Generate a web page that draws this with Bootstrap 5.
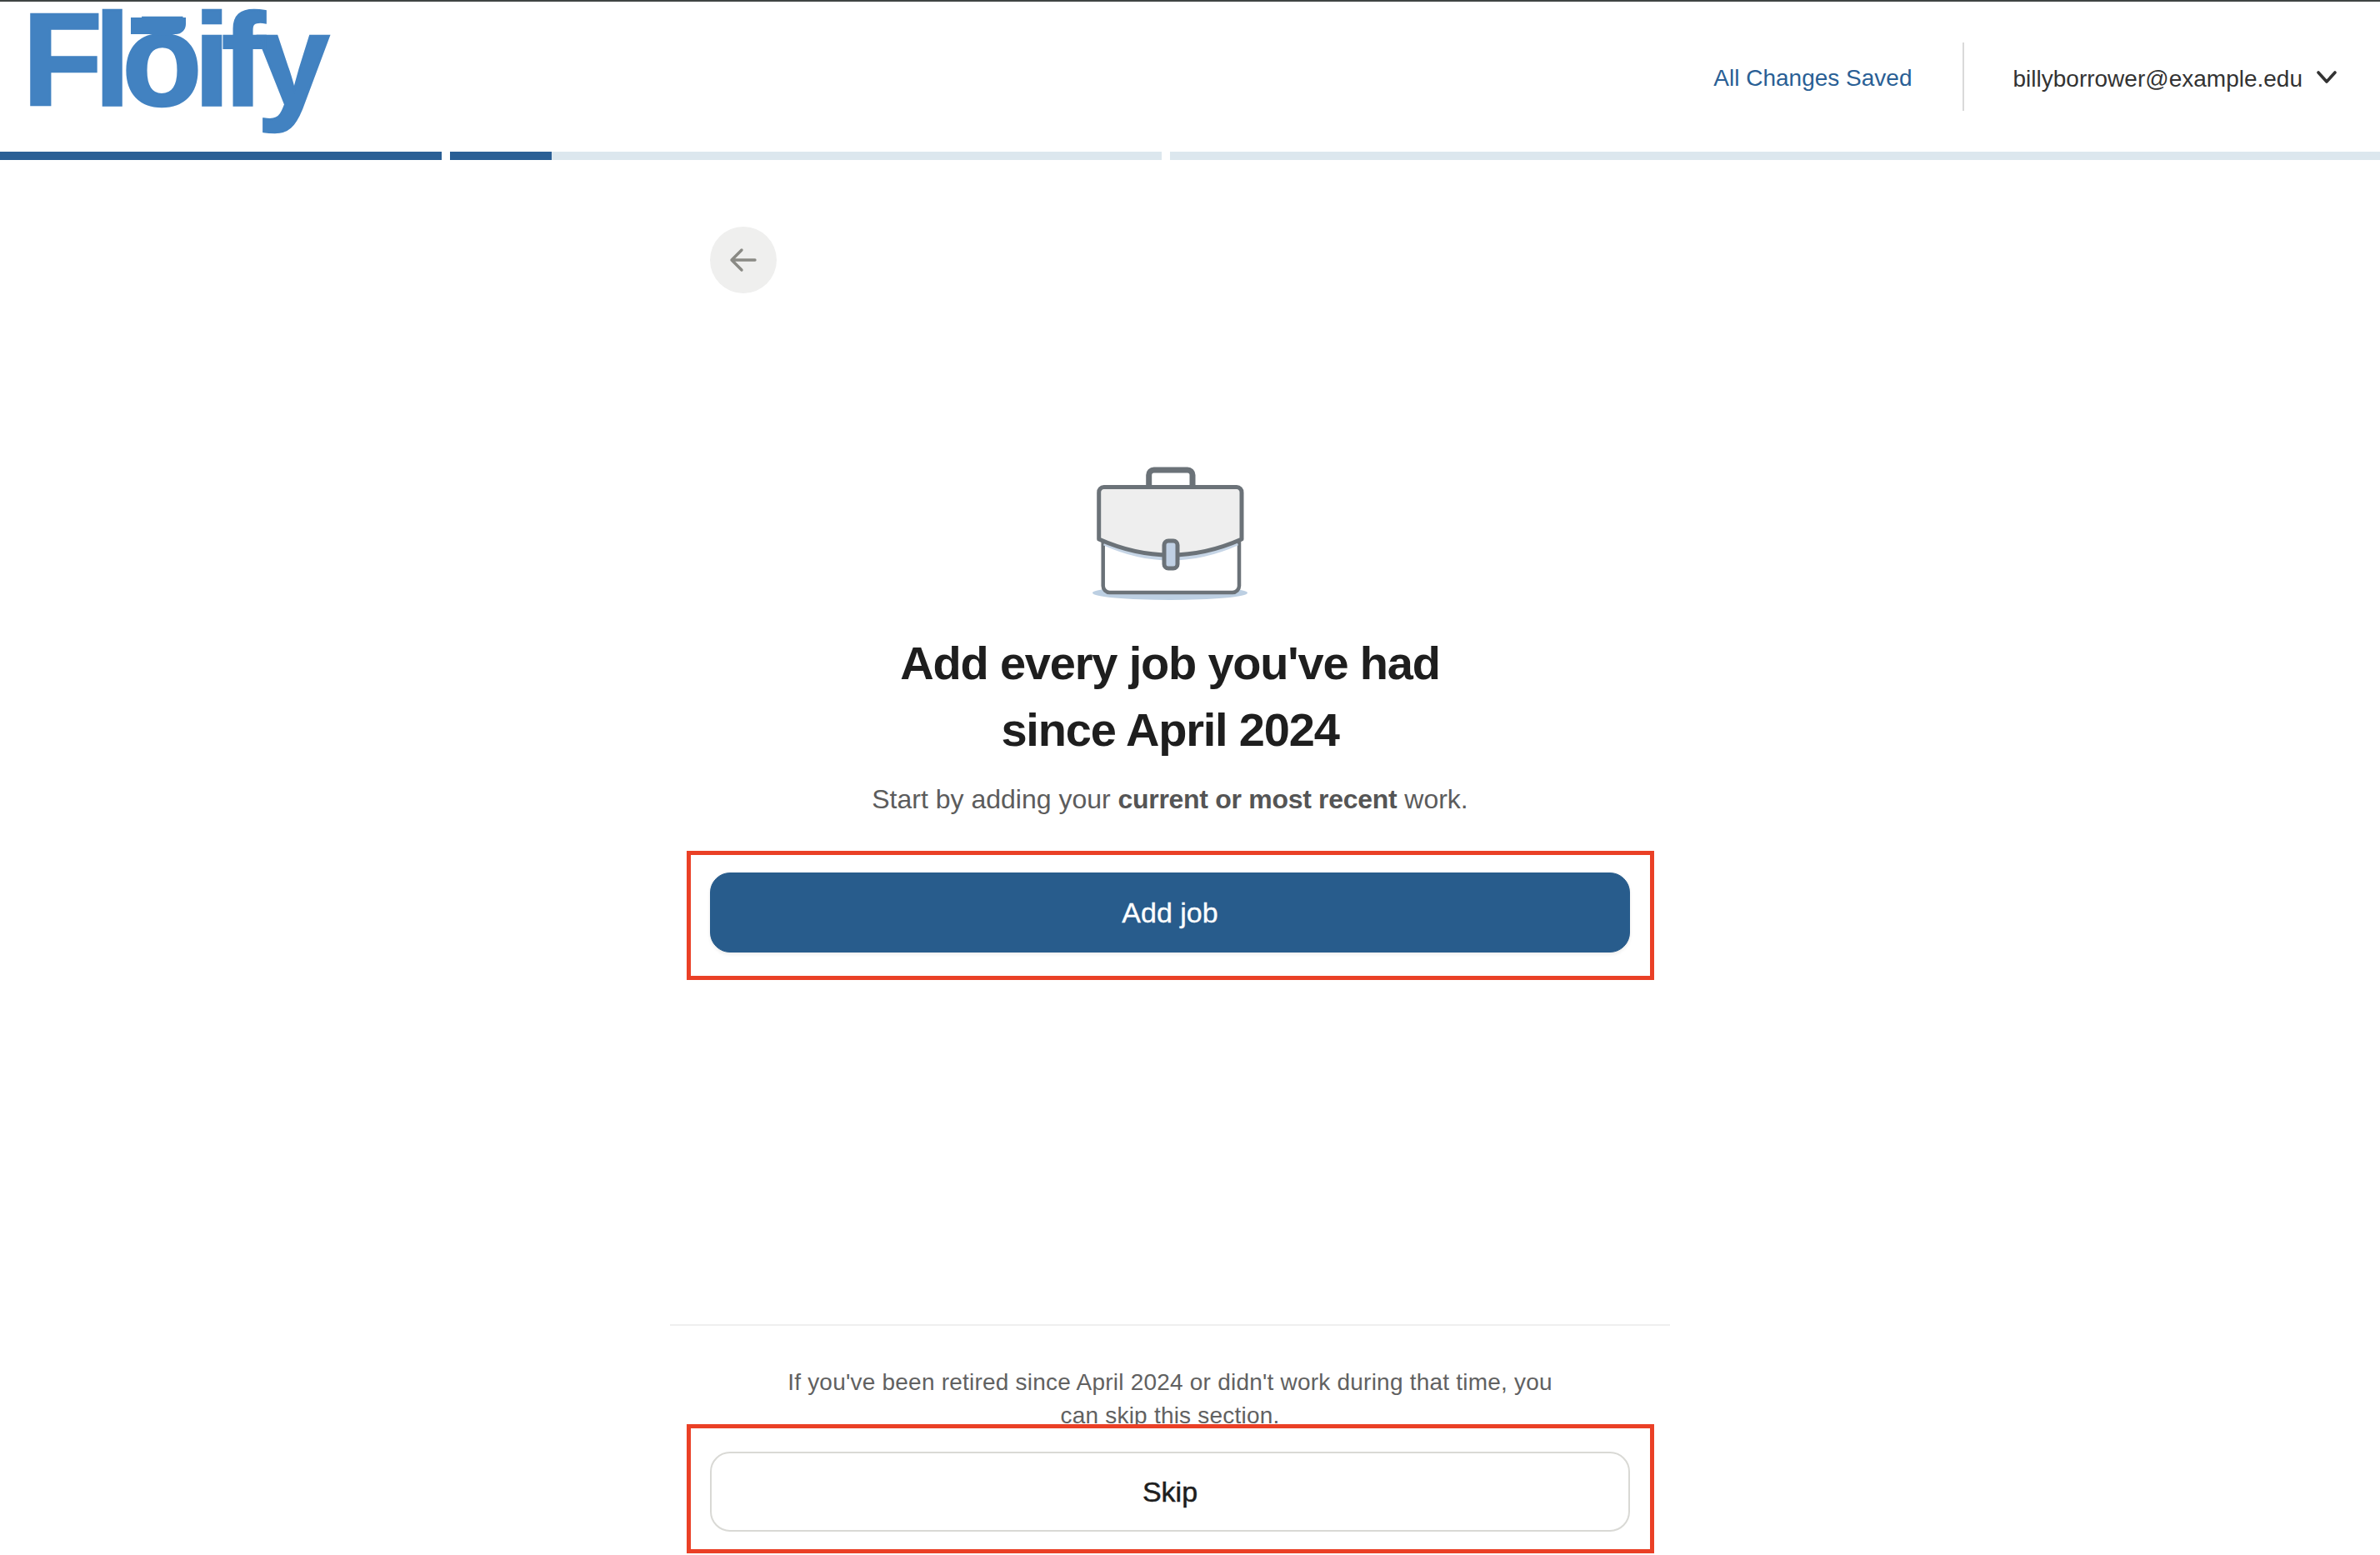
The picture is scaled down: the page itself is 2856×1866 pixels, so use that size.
<!DOCTYPE html>
<html lang="en">
<head>
<meta charset="utf-8">
<title>Floify</title>
<link href="https://cdn.jsdelivr.net/npm/bootstrap@5.3.0/dist/css/bootstrap.min.css" rel="stylesheet">
<style>
html,body{height:1866px;overflow:hidden;background:#fff;}
body{font-family:"Liberation Sans",Arial,sans-serif;color:#222;}
.topline{height:2px;background:#3f4443;}
.app-head{height:180px;}
.brand{position:relative;display:block;margin-left:27px;margin-top:-40px;font-size:157px;line-height:140px;font-weight:700;color:#4282c1;letter-spacing:-10px;-webkit-text-stroke:2.5px #4282c1;text-decoration:none;}
.brand-bar{position:absolute;left:130px;top:19px;width:66px;height:20px;background:#4282c1;border-radius:0 0 12px 0;}
.saved{font-size:28px;padding-top:3px;color:#2a5f95;}
.vrule{width:2px;height:82px;background:#d9d9d9;margin:0 59px 0 60px;}
.mail{font-size:28px;padding-top:5px;color:#333;}
.chev{margin:0 52px 0 17px;}
.steps{gap:10px;height:10px;}
.steps .progress{height:10px;border-radius:0;background:#dce7ee;}
.steps .progress-bar{background:#2a5f95;}
.seg-a{width:530px;}
.seg-b{width:854px;}
.seg-c{flex:1;}
.page-col{width:1200px;margin-left:804px;}
.inner-col{width:1104px;margin:0 auto;}
.back-btn{width:80px;height:80px;margin-top:80px;background:#efefee;border:0;}
.case-wrap{margin-top:208px;height:160px;}
.title{margin:36px 0 0;font-size:56px;line-height:80px;font-weight:700;color:#1e1e1e;letter-spacing:-1.2px;}
.lede{margin:23px 0 0;font-size:32px;line-height:40px;color:#5c5c5c;}
.lede b{font-weight:700;letter-spacing:-.3px;color:#555;}
.redbox{position:relative;width:1161px;margin-left:-28px;background:transparent;border:5px solid #ea4026;padding-left:23px;padding-right:24px;}
.box-a{margin-top:42px;padding-top:21px;padding-bottom:28px;}
.box-b{margin-top:-10px;padding-top:28px;padding-bottom:21px;}
.act{height:96px;border-radius:24px;font-size:34px;line-height:1;font-weight:400;}
.act-main{background:#285c8c;border:1px solid #285c8c;color:#fff;box-shadow:0 2px 4px rgba(0,0,0,.08);-webkit-text-stroke:.3px #fff;}
.act-alt{background:#fff;border:2px solid #d9d9d5;color:#1e1e1e;-webkit-text-stroke:.5px #1e1e1e;}
.foot-rule{height:2px;margin-top:413px;background:#efefef;}
.foot-text{width:930px;margin:48px auto 0;font-size:28px;line-height:40px;color:#616161;letter-spacing:.22px;}
</style>
</head>
<body>
<div class="topline"></div>
<header class="app-head d-flex justify-content-between align-items-center">
  <a class="brand" href="#">Flōify<span class="brand-bar"></span></a>
  <div class="d-flex align-items-center">
    <span class="saved">All Changes Saved</span>
    <span class="vrule"></span>
    <span class="mail">billyborrower@example.edu</span>
    <svg class="chev" width="24" height="15" viewBox="0 0 24 15" fill="none" stroke="#333" stroke-width="3.6" stroke-linecap="round" stroke-linejoin="round"><path d="M2 2l10 11L22 2"/></svg>
  </div>
</header>
<div class="steps d-flex">
  <div class="progress seg-a"><div class="progress-bar" style="width:100%"></div></div>
  <div class="progress seg-b"><div class="progress-bar" style="width:14.3%"></div></div>
  <div class="progress seg-c"><div class="progress-bar" style="width:0%"></div></div>
</div>
<main class="page-col">
  <div class="inner-col">
    <button class="back-btn btn rounded-circle d-flex align-items-center justify-content-center p-0" type="button" aria-label="Back">
      <svg width="34" height="30" viewBox="0 0 34 30" fill="none" stroke="#8a8a85" stroke-width="3.4" stroke-linecap="round" stroke-linejoin="round"><path d="M31 15H3M15 3L3 15l12 12"/></svg>
    </button>
    <div class="case-wrap d-flex justify-content-center">
      <svg width="186" height="160" viewBox="0 0 186 160">
        <ellipse cx="93" cy="151.5" rx="93" ry="8.5" fill="#bccfe2"/>
        <path d="M67.7 28V10a6 6 0 0 1 6-6H114a6 6 0 0 1 6 6v18" fill="none" stroke="#6b7278" stroke-width="7"/>
        <path d="M12.7 85v58a8 8 0 0 0 8 8H168a8 8 0 0 0 8-8V85z" fill="#fff" stroke="#6b7278" stroke-width="4.5"/>
        <path d="M14 92Q93 128 174 92" fill="none" stroke="#c6d5e6" stroke-width="5"/>
        <path d="M7.7 31a6 6 0 0 1 6-6.500H173a6 6 0 0 1 6 6.500V87Q93 125 7.700 87z" fill="#eeeeee" stroke="#6b7278" stroke-width="5" stroke-linejoin="round"/>
        <rect x="86" y="89" width="16" height="33" rx="5" fill="#c0d0e4" stroke="#6b7278" stroke-width="5"/>
      </svg>
    </div>
    <h1 class="title text-center">Add every job you've had<br>since April 2024</h1>
    <p class="lede text-center">Start by adding your <b>current or most recent</b> work.</p>
    <div class="redbox box-a">
      <button class="act act-main btn w-100" type="button">Add job</button>
    </div>
  </div>
  <div class="foot-rule"></div>
  <p class="foot-text text-center">If you've been retired since April 2024 or didn't work during that time, you can skip this section.</p>
  <div class="inner-col">
    <div class="redbox box-b">
      <button class="act act-alt btn w-100" type="button">Skip</button>
    </div>
  </div>
</main>
<script src="https://cdn.jsdelivr.net/npm/bootstrap@5.3.0/dist/js/bootstrap.bundle.min.js"></script>
</body>
</html>
